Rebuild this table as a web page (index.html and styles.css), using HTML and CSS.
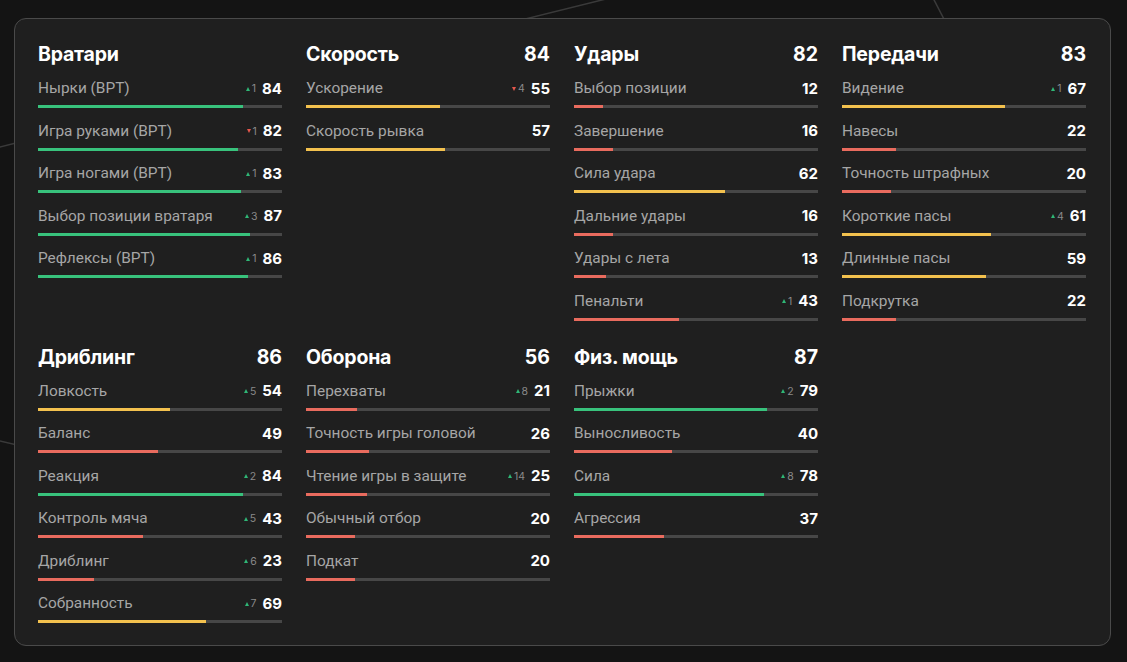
FILE: index.html
```html
<!DOCTYPE html>
<html lang="ru">
<head>
<meta charset="utf-8">
<link rel="stylesheet" href="styles.css">
</head>
<body>
<svg class="bg-lines" width="1127" height="662" viewBox="0 0 1127 662">
  <line x1="440" y1="40" x2="610" y2="-2" />
  <line x1="932" y1="-4" x2="960" y2="50" />
  <line x1="-4" y1="148" x2="60" y2="132" />
  <line x1="-4" y1="440" x2="60" y2="455" />
</svg>
<div class="card">
  <div class="grid">
    <section class="group">
      <div class="group-head"><h2>Вратари</h2></div>
      <div class="rows">
        <div class="row"><div class="line"><span class="label">Нырки (ВРТ)</span><span class="delta up">1</span><span class="val">84</span></div><div class="track"><div class="fill green" style="width:84%"></div></div></div>
        <div class="row"><div class="line"><span class="label">Игра руками (ВРТ)</span><span class="delta down">1</span><span class="val">82</span></div><div class="track"><div class="fill green" style="width:82%"></div></div></div>
        <div class="row"><div class="line"><span class="label">Игра ногами (ВРТ)</span><span class="delta up">1</span><span class="val">83</span></div><div class="track"><div class="fill green" style="width:83%"></div></div></div>
        <div class="row"><div class="line"><span class="label">Выбор позиции вратаря</span><span class="delta up">3</span><span class="val">87</span></div><div class="track"><div class="fill green" style="width:87%"></div></div></div>
        <div class="row"><div class="line"><span class="label">Рефлексы (ВРТ)</span><span class="delta up">1</span><span class="val">86</span></div><div class="track"><div class="fill green" style="width:86%"></div></div></div>
      </div>
    </section>
    <section class="group">
      <div class="group-head"><h2>Скорость</h2><span class="total">84</span></div>
      <div class="rows">
        <div class="row"><div class="line"><span class="label">Ускорение</span><span class="delta down">4</span><span class="val">55</span></div><div class="track"><div class="fill yellow" style="width:55%"></div></div></div>
        <div class="row"><div class="line"><span class="label">Скорость рывка</span><span class="val">57</span></div><div class="track"><div class="fill yellow" style="width:57%"></div></div></div>
      </div>
    </section>
    <section class="group">
      <div class="group-head"><h2>Удары</h2><span class="total">82</span></div>
      <div class="rows">
        <div class="row"><div class="line"><span class="label">Выбор позиции</span><span class="val">12</span></div><div class="track"><div class="fill red" style="width:12%"></div></div></div>
        <div class="row"><div class="line"><span class="label">Завершение</span><span class="val">16</span></div><div class="track"><div class="fill red" style="width:16%"></div></div></div>
        <div class="row"><div class="line"><span class="label">Сила удара</span><span class="val">62</span></div><div class="track"><div class="fill yellow" style="width:62%"></div></div></div>
        <div class="row"><div class="line"><span class="label">Дальние удары</span><span class="val">16</span></div><div class="track"><div class="fill red" style="width:16%"></div></div></div>
        <div class="row"><div class="line"><span class="label">Удары с лета</span><span class="val">13</span></div><div class="track"><div class="fill red" style="width:13%"></div></div></div>
        <div class="row"><div class="line"><span class="label">Пенальти</span><span class="delta up">1</span><span class="val">43</span></div><div class="track"><div class="fill red" style="width:43%"></div></div></div>
      </div>
    </section>
    <section class="group">
      <div class="group-head"><h2>Передачи</h2><span class="total">83</span></div>
      <div class="rows">
        <div class="row"><div class="line"><span class="label">Видение</span><span class="delta up">1</span><span class="val">67</span></div><div class="track"><div class="fill yellow" style="width:67%"></div></div></div>
        <div class="row"><div class="line"><span class="label">Навесы</span><span class="val">22</span></div><div class="track"><div class="fill red" style="width:22%"></div></div></div>
        <div class="row"><div class="line"><span class="label">Точность штрафных</span><span class="val">20</span></div><div class="track"><div class="fill red" style="width:20%"></div></div></div>
        <div class="row"><div class="line"><span class="label">Короткие пасы</span><span class="delta up">4</span><span class="val">61</span></div><div class="track"><div class="fill yellow" style="width:61%"></div></div></div>
        <div class="row"><div class="line"><span class="label">Длинные пасы</span><span class="val">59</span></div><div class="track"><div class="fill yellow" style="width:59%"></div></div></div>
        <div class="row"><div class="line"><span class="label">Подкрутка</span><span class="val">22</span></div><div class="track"><div class="fill red" style="width:22%"></div></div></div>
      </div>
    </section>
    <section class="group">
      <div class="group-head"><h2>Дриблинг</h2><span class="total">86</span></div>
      <div class="rows">
        <div class="row"><div class="line"><span class="label">Ловкость</span><span class="delta up">5</span><span class="val">54</span></div><div class="track"><div class="fill yellow" style="width:54%"></div></div></div>
        <div class="row"><div class="line"><span class="label">Баланс</span><span class="val">49</span></div><div class="track"><div class="fill red" style="width:49%"></div></div></div>
        <div class="row"><div class="line"><span class="label">Реакция</span><span class="delta up">2</span><span class="val">84</span></div><div class="track"><div class="fill green" style="width:84%"></div></div></div>
        <div class="row"><div class="line"><span class="label">Контроль мяча</span><span class="delta up">5</span><span class="val">43</span></div><div class="track"><div class="fill red" style="width:43%"></div></div></div>
        <div class="row"><div class="line"><span class="label">Дриблинг</span><span class="delta up">6</span><span class="val">23</span></div><div class="track"><div class="fill red" style="width:23%"></div></div></div>
        <div class="row"><div class="line"><span class="label">Собранность</span><span class="delta up">7</span><span class="val">69</span></div><div class="track"><div class="fill yellow" style="width:69%"></div></div></div>
      </div>
    </section>
    <section class="group">
      <div class="group-head"><h2>Оборона</h2><span class="total">56</span></div>
      <div class="rows">
        <div class="row"><div class="line"><span class="label">Перехваты</span><span class="delta up">8</span><span class="val">21</span></div><div class="track"><div class="fill red" style="width:21%"></div></div></div>
        <div class="row"><div class="line"><span class="label">Точность игры головой</span><span class="val">26</span></div><div class="track"><div class="fill red" style="width:26%"></div></div></div>
        <div class="row"><div class="line"><span class="label">Чтение игры в защите</span><span class="delta up">14</span><span class="val">25</span></div><div class="track"><div class="fill red" style="width:25%"></div></div></div>
        <div class="row"><div class="line"><span class="label">Обычный отбор</span><span class="val">20</span></div><div class="track"><div class="fill red" style="width:20%"></div></div></div>
        <div class="row"><div class="line"><span class="label">Подкат</span><span class="val">20</span></div><div class="track"><div class="fill red" style="width:20%"></div></div></div>
      </div>
    </section>
    <section class="group">
      <div class="group-head"><h2>Физ. мощь</h2><span class="total">87</span></div>
      <div class="rows">
        <div class="row"><div class="line"><span class="label">Прыжки</span><span class="delta up">2</span><span class="val">79</span></div><div class="track"><div class="fill green" style="width:79%"></div></div></div>
        <div class="row"><div class="line"><span class="label">Выносливость</span><span class="val">40</span></div><div class="track"><div class="fill red" style="width:40%"></div></div></div>
        <div class="row"><div class="line"><span class="label">Сила</span><span class="delta up">8</span><span class="val">78</span></div><div class="track"><div class="fill green" style="width:78%"></div></div></div>
        <div class="row"><div class="line"><span class="label">Агрессия</span><span class="val">37</span></div><div class="track"><div class="fill red" style="width:37%"></div></div></div>
      </div>
    </section>
  </div>
</div>
</body>
</html>
```

FILE: styles.css
```css
* { box-sizing: border-box; }
html, body { margin: 0; }
body {
  background: #141414;
  width: 1127px;
  height: 662px;
  padding: 18px 16px 16px 14px;
  font-family: "Inter", "Liberation Sans", sans-serif;
  color: #fff;
  position: relative;
  overflow: hidden;
}
.bg-lines {
  position: absolute;
  left: 0;
  top: 0;
  z-index: 0;
}
.bg-lines line {
  stroke: #3a3a3a;
  stroke-width: 1.5;
}
.card {
  position: relative;
  z-index: 1;
  height: 628px;
  background: #1f1f1f;
  border: 1px solid #4a4a4a;
  border-radius: 12px;
  padding: 23px 24px 22px 23px;
}
.grid {
  display: grid;
  grid-template-columns: repeat(4, 244px);
  column-gap: 24px;
  row-gap: 24px;
  align-items: start;
}
.group-head {
  display: flex;
  justify-content: space-between;
  align-items: center;
  height: 24px;
  margin-bottom: 12px;
}
.group-head h2 {
  margin: 0;
  font-size: 19.5px;
  font-weight: 700;
  letter-spacing: -0.2px;
}
.total {
  font-size: 19.5px;
  font-weight: 700;
}
.rows {
  display: flex;
  flex-direction: column;
  gap: 12.5px;
}
.line {
  display: flex;
  align-items: center;
  height: 20px;
}
.label {
  flex: 1;
  font-family: "Roboto", "Liberation Sans", sans-serif;
  font-size: 15.4px;
  color: #a6a6a6;
  white-space: nowrap;
}
.delta {
  display: flex;
  align-items: center;
  font-size: 10.5px;
  color: #8a8a8a;
  margin-right: 6px;
  margin-top: 1px;
}
.delta::before {
  content: "";
  width: 0;
  height: 0;
  border-left: 2.5px solid transparent;
  border-right: 2.5px solid transparent;
  margin-right: 2px;
}
.delta.up::before {
  border-bottom: 4px solid #2fb676;
}
.delta.down::before {
  border-top: 4px solid #e5574c;
}
.val {
  font-size: 15px;
  font-weight: 700;
  color: #fff;
}
.track {
  margin-top: 7px;
  height: 3px;
  background: #474747;
}
.fill {
  height: 3px;
}
.fill.green { background: #38c27c; }
.fill.yellow { background: #f3c14e; }
.fill.red { background: #e96b5e; }
```
